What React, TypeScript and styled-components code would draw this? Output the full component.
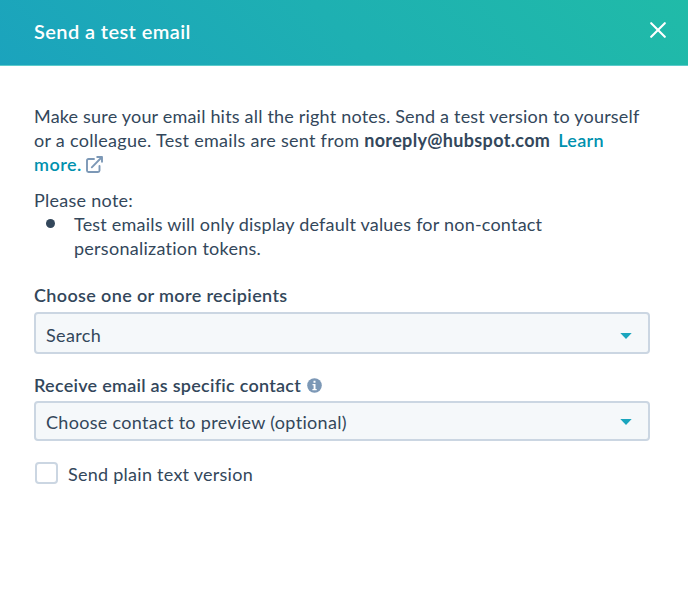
import React from 'react';
import styled, { createGlobalStyle } from 'styled-components';

const GlobalStyle = createGlobalStyle`
  * { box-sizing: border-box; }
  body {
    margin: 0;
    background: #fff;
    color: #33475b;
    font: 400 18px/24px Lato, "Open Sans", sans-serif;
    font-variant-ligatures: none;
  }
`;

const Dialog = styled.main`
  width: 688px;
  height: 614px;
  overflow: hidden;
  background: #fff;
`;

const Header = styled.header`
  display: flex;
  align-items: center;
  justify-content: space-between;
  height: 66px;
  padding: 0 22px 3px 34px;
  color: #fff;
  background: linear-gradient(45deg, #1ba3bd 0%, #1eb0b2 50%, #20bba8 100%);
  border-bottom: 1px solid #5ccbcb;
`;

const Title = styled.h1`
  margin: 0;
  font-size: 20px;
  font-weight: 600;
  line-height: 24px;
`;

const CloseButton = styled.button`
  display: flex;
  padding: 0;
  margin-top: -3px;
  border: 0;
  color: inherit;
  background: none;
`;

const Body = styled.section`
  padding: 38px 38px 0 34px;
`;

const Line = styled.span<{ $spacing?: number }>`
  display: block;
  white-space: pre;
  letter-spacing: ${(p) => p.$spacing ?? 0}px;
`;

const Run = styled.span<{ $spacing?: number }>`
  letter-spacing: ${(p) => p.$spacing ?? 0}px;
`;

const Intro = styled.p`
  margin: 0 0 12px;
`;

const Address = styled.strong`
  margin-right: 8px;
  font-weight: 700;
`;

const Link = styled.a`
  color: #0091ae;
  font-weight: 600;
`;

const ExternalIcon = styled.svg`
  margin-left: 4px;
  vertical-align: -2px;
`;

const Notes = styled.ul`
  margin: 0;
  padding: 0;
  list-style: none;
`;

const Note = styled.li`
  display: flex;

  &::before {
    content: '';
    flex: none;
    width: 9px;
    height: 9px;
    margin: 7px 19px 0 12px;
    border-radius: 50%;
    background: #33475b;
  }
`;

const Label = styled.label`
  display: flex;
  align-items: center;
  gap: 6px;
  font-weight: 600;
  white-space: nowrap;
`;

const Field = styled.div<{ $top: number }>`
  margin-top: ${(p) => p.$top}px;
`;

const Select = styled.div<{ $height: number; $gap: number; $pad: number }>`
  display: flex;
  align-items: center;
  justify-content: space-between;
  height: ${(p) => p.$height}px;
  margin-top: ${(p) => p.$gap}px;
  padding: ${(p) => p.$pad}px 16px 0 10px;
  border: 2px solid #cbd6e2;
  border-radius: 4px;
  background: #f5f8fa;
`;

const Arrow = styled.svg<{ $drop: number }>`
  margin-top: ${(p) => p.$drop}px;
`;

const CheckRow = styled.label`
  display: flex;
  align-items: center;
  gap: 10px;
  margin: 21px 0 0 1px;
`;

const Box = styled.span`
  width: 23px;
  height: 22px;
  margin-bottom: 2px;
  border: 2px solid #cbd6e2;
  border-radius: 4px;
`;

const Caret = ({ drop = 0 }: { drop?: number }) => (
  <Arrow $drop={drop} width="12" height="6" viewBox="0 0 12 6">
    <path d="M.3 0h11.4L6 6z" fill="#1aa5bd" />
  </Arrow>
);

export default function App() {
  return (
    <Dialog>
      <GlobalStyle />
      <Header>
        <Title><Run $spacing={0.4}>Send a test email</Run></Title>
        <CloseButton aria-label="Close">
          <svg width="16" height="16" viewBox="0 0 16 16" fill="none" stroke="currentColor" strokeWidth="2.1" strokeLinecap="round">
            <path d="M1.2 1.2l13.6 13.6M14.8 1.2L1.2 14.8" />
          </svg>
        </CloseButton>
      </Header>
      <Body>
        <Intro>
          <Line $spacing={0.195}>Make sure your email hits all the right notes. Send a test version to yourself</Line>
          <Line>
            <Run $spacing={0.29}>or a colleague. Test emails are sent from </Run>
            <Address><Run $spacing={0.34}>noreply@hubspot.com</Run></Address>
            <Link><Run $spacing={0.3}>Learn</Run></Link>
          </Line>
          <Line>
            <Link><Run $spacing={0.5}>more.</Run></Link>
            <ExternalIcon width="17" height="17" viewBox="0 0 17 17" fill="none" stroke="#7c98b6" strokeWidth="1.9" strokeLinecap="round" strokeLinejoin="round">
              <path d="M8 3H2.5Q1 3 1 4.500V14.500Q1 16 2.500 16H12Q13.500 16 13.500 14.500V10M5.800 11.300L15.500 1.500M11.200 1H16V5.800" />
            </ExternalIcon>
          </Line>
        </Intro>
        <Line $spacing={0.27}>Please note:</Line>
        <Notes>
          <Note>
            <div>
              <Line $spacing={0.21}>Test emails will only display default values for non-contact</Line>
              <Line $spacing={0.26}>personalization tokens.</Line>
            </div>
          </Note>
        </Notes>
        <Field $top={23}>
          <Label><Run $spacing={0.36}>Choose one or more recipients</Run></Label>
          <Select $height={42} $gap={5} $pad={3}>
            <Run $spacing={0.35}>Search</Run>
            <Caret drop={2} />
          </Select>
        </Field>
        <Field $top={19}>
          <Label>
            <Run $spacing={0.26}>Receive email as specific contact</Run>
            <svg width="15" height="15" viewBox="0 0 15 15">
              <circle cx="7.500" cy="7.500" r="7.300" fill="#7c98b6" />
              <path d="M6.500 2.800h2v2h-2zM5.500 6h3v4.900h1.200v1.300H5.400v-1.300h1.200V7.300H5.500z" fill="#fff" />
            </svg>
          </Label>
          <Select $height={40} $gap={4} $pad={1}>
            <Run $spacing={0.31}>Choose contact to preview (optional)</Run>
            <Caret />
          </Select>
        </Field>
        <CheckRow>
          <Box />
          <Run $spacing={0.26}>Send plain text version</Run>
        </CheckRow>
      </Body>
    </Dialog>
  );
}
